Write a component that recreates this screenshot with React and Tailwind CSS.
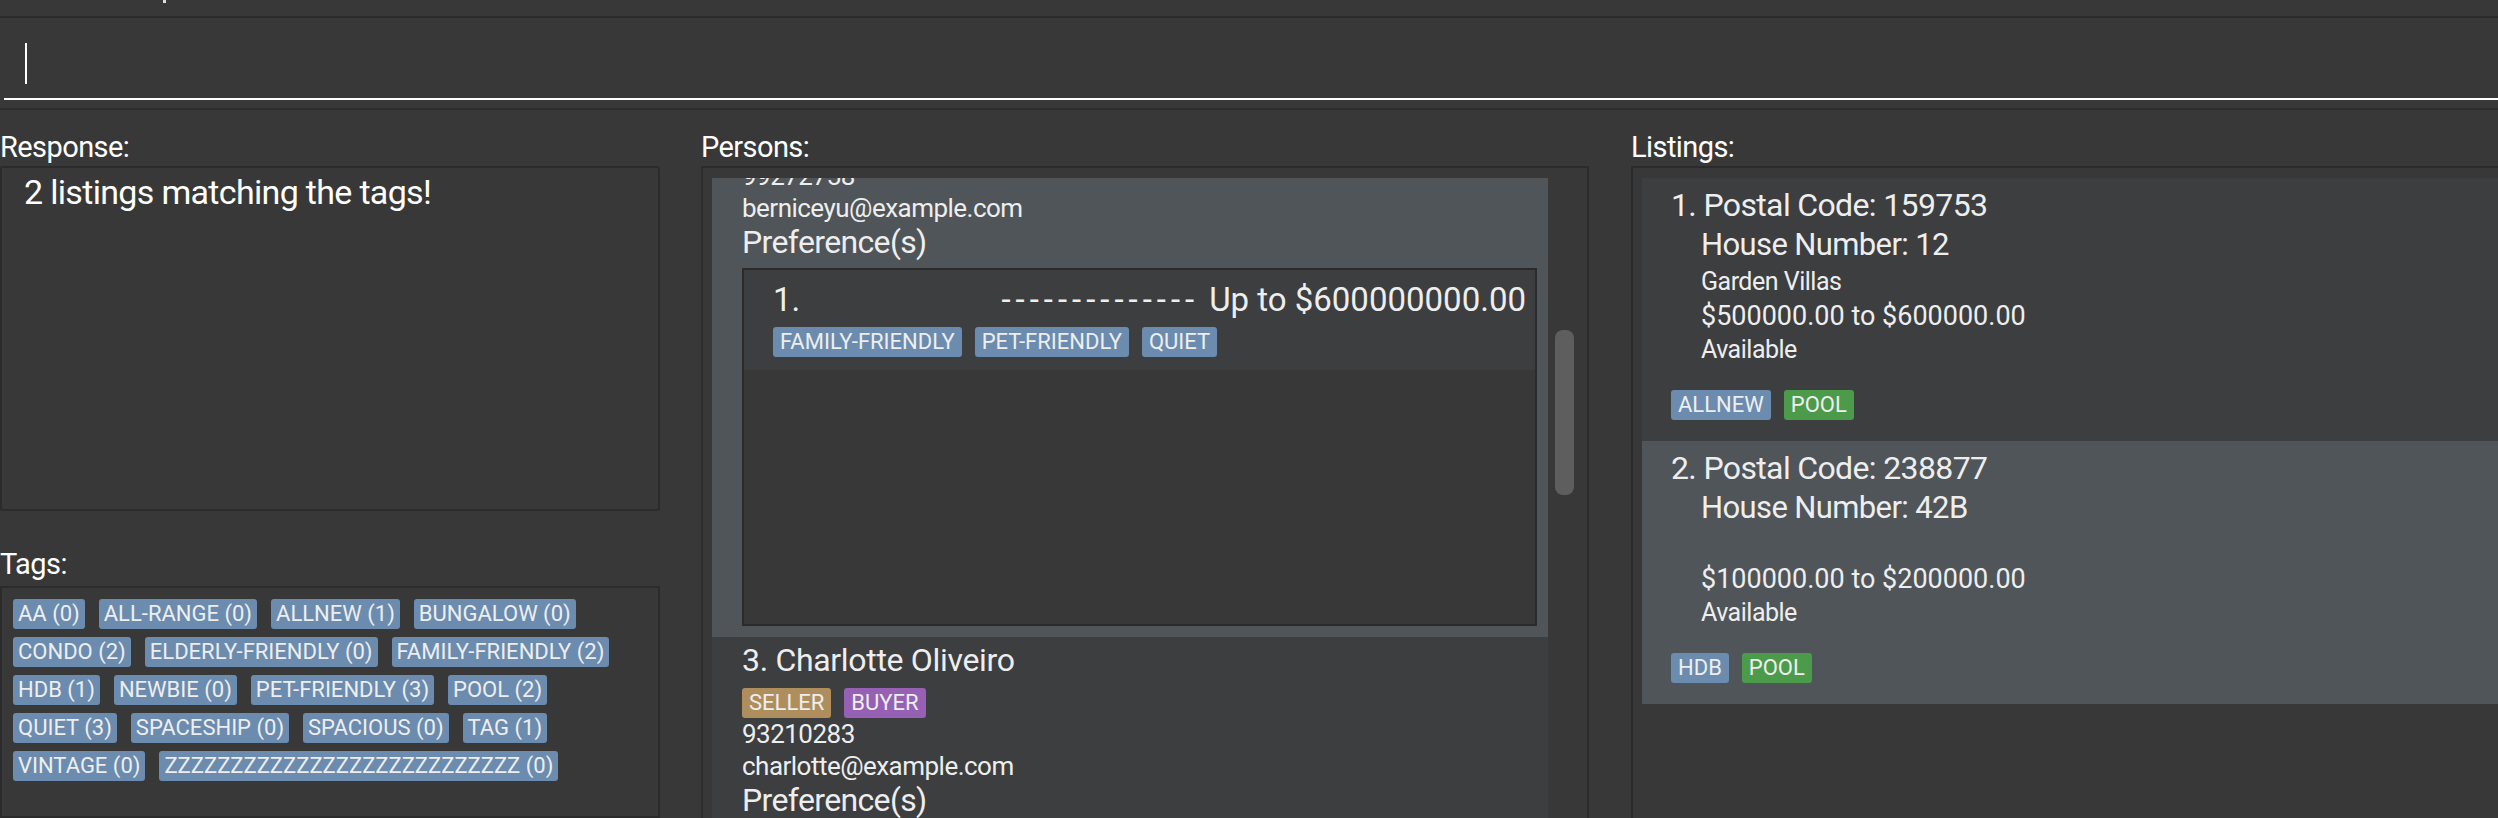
import React from 'react';

const FONT = { fontFamily: 'Roboto, "Open Sans", sans-serif' };

const tagRows = [
  [['AA', 0], ['ALL-RANGE', 0], ['ALLNEW', 1], ['BUNGALOW', 0]],
  [['CONDO', 2], ['ELDERLY-FRIENDLY', 0], ['FAMILY-FRIENDLY', 2]],
  [['HDB', 1], ['NEWBIE', 0], ['PET-FRIENDLY', 3], ['POOL', 2]],
  [['QUIET', 3], ['SPACESHIP', 0], ['SPACIOUS', 0], ['TAG', 1]],
  [['VINTAGE', 0], ['ZZZZZZZZZZZZZZZZZZZZZZZZZZZ', 0]],
];

const listings = [
  {
    id: 1,
    postal: '159753',
    house: '12',
    name: 'Garden Villas',
    price: '$500000.00 to $600000.00',
    status: 'Available',
    tags: [['ALLNEW', 'bg-[#6b8cae]'], ['POOL', 'bg-[#4b9b4b]']],
    selected: false,
  },
  {
    id: 2,
    postal: '238877',
    house: '42B',
    name: '',
    price: '$100000.00 to $200000.00',
    status: 'Available',
    tags: [['HDB', 'bg-[#6b8cae]'], ['POOL', 'bg-[#4b9b4b]']],
    selected: true,
  },
];

const Chip = ({ children, color = 'bg-[#6b8cae]', pad = 'px-[7px]' }) => (
  <span className={`${color} ${pad} rounded-[3px] text-[22px] leading-[30px] text-[#eeeeee] whitespace-nowrap`}>
    {children}
  </span>
);

const PersonCard = ({ index, name, roles, phone, email, selected, prefs, className = '' }) => (
  <div className={`${selected ? 'bg-[#4f5558]' : 'bg-[#3c3e40]'} pt-[5px] pl-[30px] pr-[11px] pb-[11px] text-[#eeeeee] ${className}`}>
    <div className="text-[32px] leading-[36px] tracking-[-0.01em]">{index}. {name}</div>
    <div className="mt-[10px] flex gap-[13px]">
      {roles.map(([r, c]) => (
        <Chip key={r} color={c}>{r}</Chip>
      ))}
    </div>
    <div className="text-[26px] leading-[32px] tracking-[-0.02em]">{phone}</div>
    <div className="text-[26px] leading-[32px] tracking-[-0.02em]">{email}</div>
    <div className="text-[32px] leading-[36px] tracking-[-0.02em]">Preference(s)</div>
    <div className="mt-[8px] h-[358px] border-2 border-[#2b2b2b] bg-[#383838]">
      {prefs.map((p, i) => (
        <div key={i} className="h-[100px] bg-[#3c3e40] pt-[12px] pl-[29px] pr-[9px]">
          <div className="flex justify-between text-[33px] leading-[36px]">
            <span>{i + 1}.</span>
            <span className="flex">
              <span className="mr-[10px] tracking-[5px]">--------------</span>
              <span>{p.budget}</span>
            </span>
          </div>
          <div className="mt-[9px] flex gap-[13px]">
            {p.tags.map((t) => (
              <Chip key={t}>{t}</Chip>
            ))}
          </div>
        </div>
      ))}
    </div>
  </div>
);

const ListingCard = ({ l }) => (
  <div className={`${l.selected ? 'bg-[#4f5558]' : 'bg-[#3c3e40]'} h-[263px] pt-[7px] pl-[29px] text-[#eeeeee]`}>
    <div className="text-[32px] leading-[40px] tracking-[-0.02em]">{l.id}. Postal Code: {l.postal}</div>
    <div className="pl-[30px]">
      <div className="text-[31px] leading-[40px] tracking-[-0.02em]">House Number: {l.house}</div>
      <div className="h-[34px] text-[25px] leading-[34px] tracking-[-0.02em]">{l.name}</div>
      <div className="text-[27px] leading-[34px]">{l.price}</div>
      <div className="text-[25px] leading-[34px] tracking-[-0.02em]">{l.status}</div>
    </div>
    <div className="mt-[23px] flex gap-[13px]">
      {l.tags.map(([t, c]) => (
        <Chip key={t} color={c}>{t}</Chip>
      ))}
    </div>
  </div>
);

const App = () => {
  return (
    <div className="h-[818px] w-[2498px] overflow-hidden bg-[#383838] text-white" style={FONT}>
      {/* menu bar, mostly scrolled off */}
      <div className="h-[18px] border-b-2 border-[#2b2b2b]">
        <div className="ml-[163px] h-[3px] w-[3px] bg-[#dddddd]" />
      </div>

      {/* command box */}
      <div className="h-[92px] border-b-2 border-[#2b2b2b] pt-[25px]">
        <div className="ml-[25px] h-[41px] w-[2px] bg-white" />
        <div className="ml-[4px] mt-[14px] h-[2px] bg-white" />
      </div>

      {/* main area */}
      <div className="flex h-[708px] pt-[22px]">
        <div className="flex w-[660px] flex-col">
          <div className="text-[29px] leading-[30px] tracking-[-0.02em]">Response:</div>
          <div className="mt-[4px] h-[345px] rounded-[3px] border-2 border-[#2b2b2b] pt-[4px] pl-[22px] text-[34px] leading-[40px] tracking-[-0.02em]">
            2 listings matching the tags!
          </div>
          <div className="mt-[38px] text-[29px] leading-[30px] tracking-[-0.02em]">Tags:</div>
          <div className="mt-[7px] flex-1 border-2 border-[#2b2b2b] pt-[11px] pl-[11px]">
            <div className="flex flex-col gap-[8px]">
              {tagRows.map((row, i) => (
                <div key={i} className="flex gap-[14px]">
                  {row.map(([t, n]) => (
                    <Chip key={t} pad="px-[5px]">{t} ({n})</Chip>
                  ))}
                </div>
              ))}
            </div>
          </div>
        </div>

        <div className="ml-[41px] flex w-[888px] flex-col">
          <div className="text-[29px] leading-[30px] tracking-[-0.02em]">Persons:</div>
          <div className="mt-[4px] flex min-h-0 flex-1 border-x-2 border-t-2 border-[#2b2b2b]">
            <div className="ml-[9px] mt-[10px] w-[836px] overflow-hidden">
              <PersonCard
                className="-mt-[99px]"
                index={2}
                name="Bernice Yu"
                roles={[['BUYER', 'bg-[#9660b4]']]}
                phone="99272758"
                email="berniceyu@example.com"
                selected
                prefs={[{ budget: 'Up to $600000000.00', tags: ['FAMILY-FRIENDLY', 'PET-FRIENDLY', 'QUIET'] }]}
              />
              <PersonCard
                index={3}
                name="Charlotte Oliveiro"
                roles={[['SELLER', 'bg-[#af8e5e]'], ['BUYER', 'bg-[#9660b4]']]}
                phone="93210283"
                email="charlotte@example.com"
                prefs={[{ budget: 'Up to $800000.00', tags: ['CONDO'] }]}
              />
            </div>
            <div className="ml-[7px] w-[19px] pt-[162px]">
              <div className="h-[165px] rounded-[8px] bg-[#5e5e5e]" />
            </div>
          </div>
        </div>

        <div className="ml-[42px] flex flex-1 flex-col">
          <div className="text-[29px] leading-[30px] tracking-[-0.02em]">Listings:</div>
          <div className="mt-[4px] min-h-0 flex-1 border-l-2 border-t-2 border-[#2b2b2b] pt-[10px] pl-[9px]">
            {listings.map((l) => (
              <ListingCard key={l.id} l={l} />
            ))}
          </div>
        </div>
      </div>
    </div>
  );
};

export default App;
